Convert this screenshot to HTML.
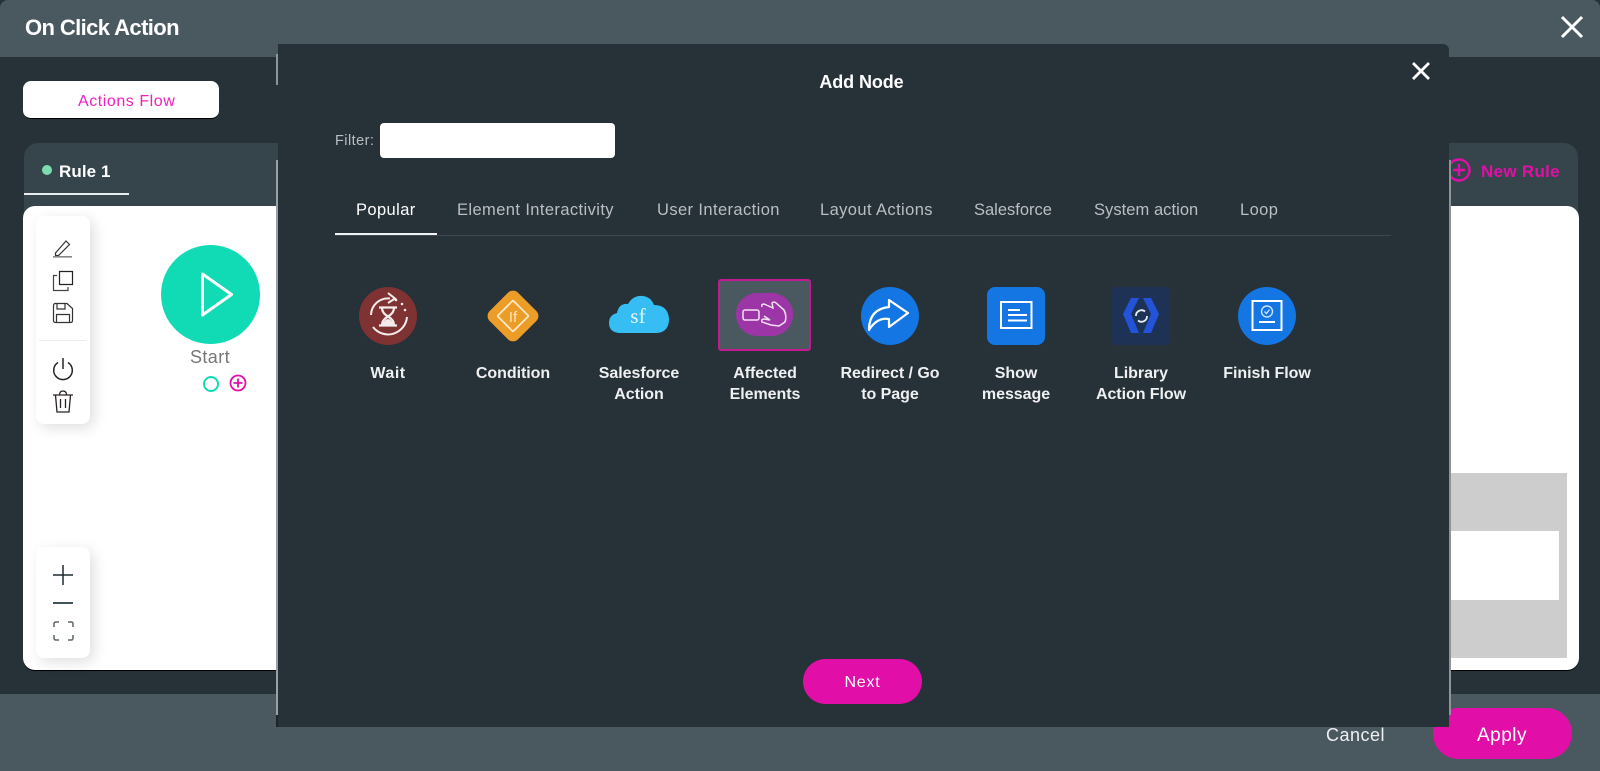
<!DOCTYPE html>
<html><head><meta charset="utf-8"><style>
html,body{margin:0;padding:0}
body{width:1600px;height:771px;position:relative;overflow:hidden;background:#273138;font-family:"Liberation Sans",sans-serif;color:#fff}
.a{position:absolute}
.t{position:absolute;white-space:nowrap}
.tab{position:absolute;top:200px;font-size:16.5px;line-height:20px;color:#b9bfc2;white-space:nowrap;letter-spacing:.4px}
.lab{position:absolute;top:363px;width:120px;text-align:center;font-size:16px;line-height:21px;font-weight:bold;color:#eef0f1;letter-spacing:-.05px}
svg{position:absolute;overflow:visible}
</style></head><body>
<div class="a" style="left:0;top:0;width:1600px;height:57px;background:#4a5960;border-radius:8px 8px 0 0"></div>
<div class="t" style="left:25px;top:14px;font-size:22px;line-height:27px;font-weight:bold;letter-spacing:-.6px">On Click Action</div>
<svg style="left:1560px;top:15px" width="24" height="24" viewBox="0 0 24 24"><path d="M2 2L22 22M22 2L2 22" stroke="#fff" stroke-width="3" fill="none"/></svg>

<div class="a" style="left:23px;top:81px;width:196px;height:37px;background:#fff;border-radius:8px;border-bottom:1px solid #000"></div>
<div class="t" style="left:78px;top:92px;font-size:16px;line-height:20px;color:#f01fc0;letter-spacing:.55px">Actions Flow</div>

<div class="a" style="left:24px;top:143px;width:1554px;height:70px;background:#36444b;border-radius:14px 14px 0 0"></div>
<div class="a" style="left:42px;top:165px;width:10px;height:10px;border-radius:50%;background:#7fdcb0"></div>
<div class="t" style="left:59px;top:161px;font-size:17px;line-height:21px;font-weight:bold;letter-spacing:.1px">Rule 1</div>
<div class="a" style="left:24px;top:193px;width:105px;height:2px;background:#e8ecec"></div>
<svg style="left:1448px;top:158px" width="24" height="24" viewBox="0 0 24 24"><circle cx="11" cy="12" r="10.5" fill="none" stroke="#e20ea8" stroke-width="2.4"/><path d="M5 12H17M11 6V18" stroke="#e20ea8" stroke-width="2.4"/></svg>
<div class="t" style="left:1481px;top:161px;font-size:17px;line-height:21px;font-weight:bold;color:#e20ea8;letter-spacing:.3px">New Rule</div>

<div class="a" style="left:23px;top:206px;width:1556px;height:464px;background:#fff;border-radius:12px;box-shadow:0 1px 0 #000"></div>
<div class="a" style="left:1300px;top:473px;width:267px;height:185px;background:#cdcdcd"></div>
<div class="a" style="left:1300px;top:531px;width:259px;height:69px;background:#fff"></div>

<div class="a" style="left:36px;top:216px;width:54px;height:208px;background:#fff;border-radius:8px;box-shadow:4px 4px 14px rgba(0,0,0,.13)"></div>
<div class="a" style="left:39px;top:340px;width:47px;height:1px;background:#ececec"></div>
<svg style="left:52px;top:238px" width="22" height="22" viewBox="0 0 22 22"><path d="M3.500 15L14 3L17.500 6.500L6.500 17.500H3.500Z" fill="none" stroke="#333" stroke-width="1.200"/><path d="M1 18.800H20" stroke="#888" stroke-width="1.600"/></svg>
<svg style="left:52px;top:270px" width="22" height="22" viewBox="0 0 22 22"><path d="M7.500 1.500H20.500V14.500H7.500Z" fill="none" stroke="#222" stroke-width="1.200"/><path d="M5 5.500H1.500V20.500H16V17" fill="none" stroke="#444" stroke-width="1.200"/></svg>
<svg style="left:52px;top:302px" width="22" height="22" viewBox="0 0 22 22"><path d="M1.500 3.500Q1.500 1.500 3.500 1.500H15L20.500 6.500V18.500Q20.500 20.500 18.500 20.500H3.500Q1.500 20.500 1.500 18.500Z" fill="none" stroke="#333" stroke-width="1.200"/><path d="M5 1.500V7H13V1.500M4.500 20.500V12.500H17.500V20.500" fill="none" stroke="#333" stroke-width="1.200"/></svg>
<svg style="left:52px;top:358px" width="22" height="22" viewBox="0 0 22 22"><path d="M6 4.500A9.300 9.300 0 1 0 16 4.500" fill="none" stroke="#222" stroke-width="1.500"/><path d="M11 0V11" stroke="#222" stroke-width="1.500"/></svg>
<svg style="left:52px;top:390px" width="22" height="24" viewBox="0 0 22 24"><path d="M1 5H21M7.500 5Q7.500 1 11 1Q14.500 1 14.500 5M3.500 5L5 22H17L18.500 5M8.500 9V18M13.500 9V18" fill="none" stroke="#2a2022" stroke-width="1.300"/></svg>

<div class="a" style="left:36px;top:547px;width:54px;height:111px;background:#fff;border-radius:8px;box-shadow:4px 4px 14px rgba(0,0,0,.13)"></div>
<svg style="left:52px;top:564px" width="22" height="22" viewBox="0 0 22 22"><path d="M1 11H21M11 1V21" stroke="#1e2a30" stroke-width="1.500"/></svg>
<div class="a" style="left:53px;top:602px;width:20px;height:2px;background:#41525a"></div>
<svg style="left:53px;top:621px" width="21" height="20" viewBox="0 0 21 20"><path d="M1 6V3Q1 1 3 1H6M15 1H18Q20 1 20 3V6M20 14V17Q20 19 18 19H15M6 19H3Q1 19 1 17V14" fill="none" stroke="#5b676d" stroke-width="1.500"/></svg>

<div class="a" style="left:161px;top:245px;width:99px;height:99px;border-radius:50%;background:#11dbb4"></div>
<svg style="left:200px;top:270px" width="36" height="48" viewBox="0 0 36 48"><path d="M2.500 4L31.500 24.500L2.500 45Z" fill="none" stroke="#fff" stroke-width="3" stroke-linejoin="round"/></svg>
<div class="t" style="left:190px;top:346px;font-size:18px;line-height:22px;color:#777;letter-spacing:.4px">Start</div>
<div class="a" style="left:203px;top:376px;width:12px;height:12px;border:2.500px solid #11dbb4;border-radius:50%"></div>
<svg style="left:229px;top:374px" width="18" height="18" viewBox="0 0 18 18"><circle cx="9" cy="9" r="7.500" fill="none" stroke="#e20ea8" stroke-width="1.800"/><path d="M4.500 9H13.500M9 4.500V13.500" stroke="#e20ea8" stroke-width="1.800"/></svg>

<!-- bottom bar + apply sit below the modal -->
<div class="a" style="left:0;top:694px;width:1600px;height:77px;background:#4a5960"></div>
<div class="a" style="left:1433px;top:708px;width:139px;height:51px;background:#e20ea8;border-radius:26px"></div>
<div class="t" style="left:1477px;top:724px;font-size:19px;line-height:23px;letter-spacing:.5px">Apply</div>

<!-- modal -->
<div class="a" style="left:276px;top:54px;width:2px;height:31px;background:#8f9597"></div>
<div class="a" style="left:276px;top:160px;width:2px;height:555px;background:#9aa0a3"></div>
<div class="a" style="left:1448px;top:160px;width:3px;height:555px;background:#8f9597"></div>
<div class="a" style="left:276px;top:715px;width:2px;height:12px;background:#1c2429"></div>
<div class="a" style="left:277.500px;top:44px;width:1171.500px;height:683px;background:#273138;border-radius:0 6px 0 0"></div>
<div class="t" style="left:277px;top:71px;width:1172px;text-align:center;font-size:18px;line-height:22px;font-weight:bold;letter-spacing:-.1px;text-indent:-3px">Add Node</div>
<svg style="left:1411px;top:61px" width="20" height="20" viewBox="0 0 20 20"><path d="M2 2L18 18M18 2L2 18" stroke="#fff" stroke-width="2.800"/></svg>
<div class="t" style="left:335px;top:131px;font-size:14.500px;line-height:20px;color:#b9bfc2;letter-spacing:.45px">Filter:</div>
<div class="a" style="left:380px;top:123px;width:235px;height:35px;background:#fff;border-radius:4px"></div>

<div class="tab" style="left:356px;color:#fff">Popular</div>
<div class="tab" style="left:457px">Element Interactivity</div>
<div class="tab" style="left:657px">User Interaction</div>
<div class="tab" style="left:820px">Layout Actions</div>
<div class="tab" style="left:974px;letter-spacing:0">Salesforce</div>
<div class="tab" style="left:1094px;letter-spacing:.05px">System action</div>
<div class="tab" style="left:1240px">Loop</div>
<div class="a" style="left:335px;top:235px;width:1056px;height:1px;background:#3c484e"></div>
<div class="a" style="left:335px;top:233px;width:102px;height:2px;background:#f2f2f2"></div>

<!-- Wait -->
<svg style="left:359px;top:287px" width="58" height="58" viewBox="0 0 58 58"><circle cx="29" cy="29" r="29" fill="#7e3232"/><path d="M12 28A17 17 0 0 1 31 11.500M48 30A19 19 0 0 1 14 40" fill="none" stroke="#f4ecec" stroke-width="2"/><path d="M29 6L36 11.500L29 16" fill="none" stroke="#f4ecec" stroke-width="2"/><path d="M20 20.500H38M20 38.500H38M23 21Q23 26 29 29.500Q35 26 35 21M23 38Q23 33 29 29.500Q35 33 35 38" fill="none" stroke="#f4ecec" stroke-width="2.200"/><path d="M23 38Q26 32 29 32Q32 32 35 38Z" fill="#f4ecec"/><circle cx="37" cy="13" r="1.300" fill="#f4ecec"/><circle cx="43" cy="17" r="1.300" fill="#f4ecec"/><circle cx="46" cy="23" r="1.300" fill="#f4ecec"/></svg>
<div class="lab" style="left:328px;letter-spacing:.5px">Wait</div>
<!-- Condition -->
<svg style="left:487px;top:290px" width="52" height="52" viewBox="0 0 52 52"><rect x="6" y="6" width="40" height="40" rx="7" transform="rotate(45 26 26)" fill="#ec9d27"/><rect x="15" y="15" width="22" height="22" rx="1" transform="rotate(45 26 26)" fill="none" stroke="#fbe8c8" stroke-width="1.800"/><text x="26" y="32" text-anchor="middle" font-family="Liberation Sans" font-size="15" fill="#fbe2b8">If</text></svg>
<div class="lab" style="left:453px">Condition</div>
<!-- SF -->
<svg style="left:609px;top:293px" width="60" height="44" viewBox="0 0 60 44"><path d="M10 40Q0 39 0 30Q0 22 8 20Q10 10 19 11Q24 2 34 3Q42 4 45 12Q59 12 60 26Q60 39 48 40Z" fill="#36bdf3"/><text x="29" y="30" text-anchor="middle" font-family="Liberation Serif" font-size="21" fill="#eaf8fe">sf</text></svg>
<div class="lab" style="left:579px">Salesforce<br>Action</div>
<!-- Affected -->
<div class="a" style="left:718px;top:279px;width:89px;height:68px;background:#4a5960;border:2px solid #c31a93;border-radius:3px"></div>
<svg style="left:735px;top:293px" width="59" height="44" viewBox="0 0 59 44"><rect x="1" y="0" width="57" height="43" rx="21" fill="#9c35a6"/><rect x="8" y="17" width="16" height="10" rx="2" fill="none" stroke="#f3e2f4" stroke-width="1.500"/><path d="M27 14Q26 11 29 11L38 15L37 10Q39 8 41 10L49 17Q52 23 50 29L44 33L36 32L27 29Q26 26 29 26L35 27L29 23" fill="none" stroke="#f3e2f4" stroke-width="1.500"/></svg>
<div class="lab" style="left:705px">Affected<br>Elements</div>
<!-- Redirect -->
<svg style="left:861px;top:287px" width="58" height="58" viewBox="0 0 58 58"><circle cx="29" cy="29" r="29" fill="#1376e3"/><path d="M8 43Q8 22 28 20V13L47 26L28 40V32Q16 30 8 43Z" fill="none" stroke="#fff" stroke-width="2.200" stroke-linejoin="round"/></svg>
<div class="lab" style="left:830px">Redirect / Go<br>to Page</div>
<!-- Show -->
<svg style="left:987px;top:287px" width="58" height="58" viewBox="0 0 58 58"><rect width="58" height="58" rx="8" fill="#1376e3"/><rect x="14" y="15" width="30.500" height="26" fill="none" stroke="#fff" stroke-width="2"/><path d="M21 23H33M21 28H40M21 33.500H40" stroke="#fff" stroke-width="2"/></svg>
<div class="lab" style="left:956px">Show<br>message</div>
<!-- Library -->
<svg style="left:1112px;top:287px" width="58" height="58" viewBox="0 0 58 58"><rect width="58" height="58" rx="3" fill="#1e3256"/><path d="M19 11H27L19 27L27 46H19L11 27Z" fill="#2253d8"/><path d="M39 11H31L39 27L31 46H39L47 27Z" fill="#2253d8"/><path d="M24 29A5.500 5.500 0 0 1 33 24.500M35 29A5.500 5.500 0 0 1 26 33.500" fill="none" stroke="#e8edf7" stroke-width="1.800"/></svg>
<div class="lab" style="left:1081px">Library<br>Action Flow</div>
<!-- Finish -->
<svg style="left:1238px;top:287px" width="58" height="58" viewBox="0 0 58 58"><circle cx="29" cy="29" r="29" fill="#1376e3"/><rect x="14.500" y="14" width="29" height="29" fill="none" stroke="#fff" stroke-width="2"/><circle cx="29" cy="24.500" r="5.500" fill="none" stroke="#cfe3fb" stroke-width="1.400"/><path d="M26.500 24.500L28.500 26.500L31.500 22.500" fill="none" stroke="#cfe3fb" stroke-width="1.300"/><path d="M21 35H37" stroke="#fff" stroke-width="2"/></svg>
<div class="lab" style="left:1207px">Finish Flow</div>

<div class="a" style="left:803px;top:659px;width:119px;height:45px;background:#e20ea8;border-radius:23px"></div>
<div class="t" style="left:803px;top:673px;width:119px;text-align:center;font-size:16px;line-height:20px;letter-spacing:.8px">Next</div>

<div class="t" style="left:1326px;top:724px;font-size:18px;line-height:22px;color:#eef0f1;letter-spacing:.5px">Cancel</div>
</body></html>
